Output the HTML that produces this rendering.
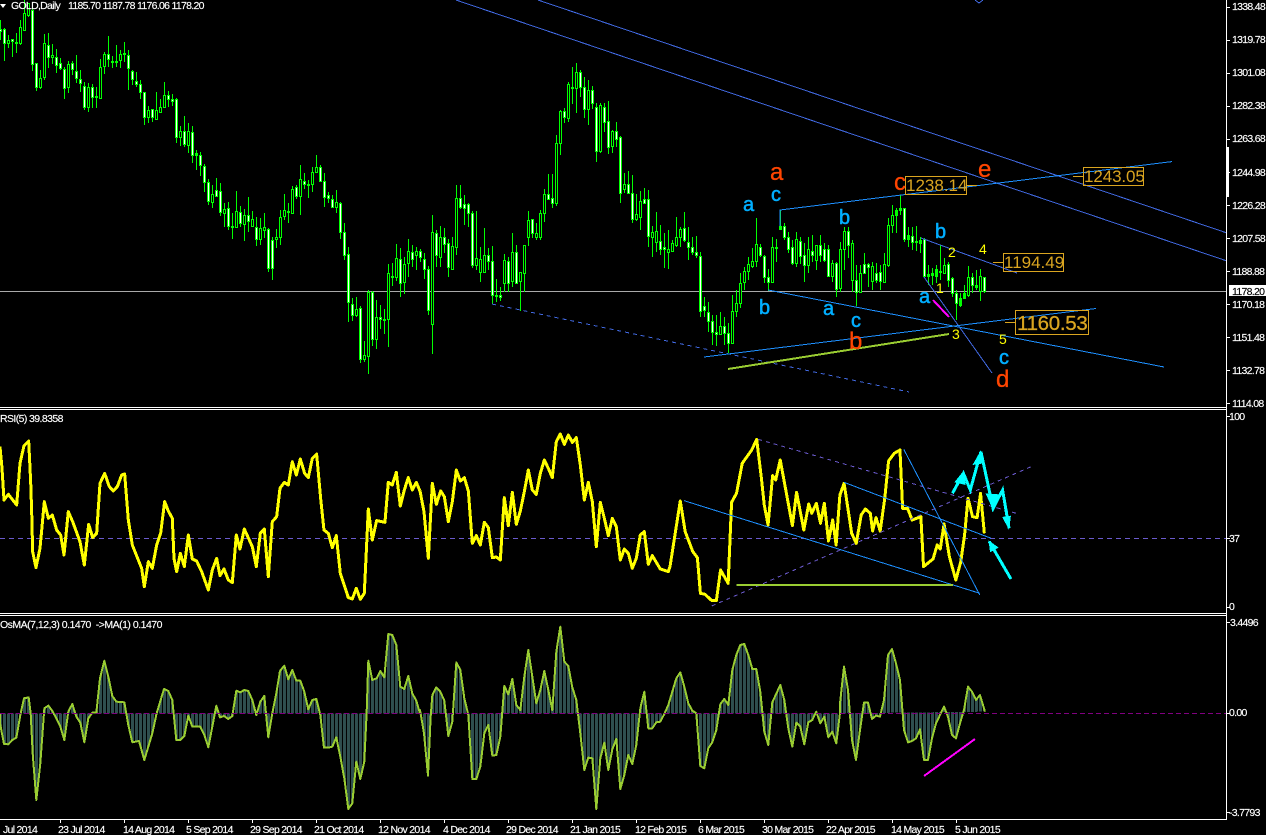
<!DOCTYPE html>
<html><head><meta charset="utf-8"><title>GOLD,Daily</title>
<style>
html,body{margin:0;padding:0;background:#000;width:1266px;height:835px;overflow:hidden}
svg{display:block}
text{font-family:"Liberation Sans",sans-serif}
.t{font-size:10.5px;letter-spacing:-.7px;fill:#fff;stroke:#fff;stroke-width:.15px}
.ln{fill:none;vector-effect:non-scaling-stroke}
.bl{font-size:20px;fill:#00aeff;stroke:#00aeff;stroke-width:.5px}
.or{font-size:24px;fill:#ff4500;stroke:#ff4500;stroke-width:.3px}
.ye{font-size:14px;fill:#ffff00}
.go{fill:#daa520;font-size:17px}
</style></head><body>
<svg width="1266" height="835" viewBox="0 0 1266 835" xmlns="http://www.w3.org/2000/svg">
<defs>
<pattern id="hb" patternUnits="userSpaceOnUse" width="12" height="12"><rect x="0" y="0" width="6" height="12" fill="#2f4f4f"/><rect x="9" y="0" width="3" height="12" fill="#2f4f4f"/></pattern>
</defs>
<rect width="1266" height="835" fill="#000"/>

<!-- price line -->
<path d="M0 291.5H1227" stroke="#a9a9a9" stroke-width="1" shape-rendering="crispEdges"/>

<!-- candles -->
<g transform="translate(.5 0)" fill="none" shape-rendering="crispEdges">
<path stroke="#00ff00" stroke-width="1" d="M0 20V40M4 28V61M8 35V48M12 39V57M16 33V53M20 20V45M24 0V30M28 3V17M32 8V71M36 63V91M40 70V89M44 34V80M48 33V68M52 44V64M56 49V73M60 58V70M64 67V99M68 61V93M72 61V75M76 55V83M80 70V92M84 82V110M88 83V112M92 84V108M96 87V108M100 59V99M104 52V74M108 36V67M112 56V68M116 45V67M120 50V68M124 42V62M128 50V90M132 70V85M136 72V87M140 80V99M144 92V125M148 106V123M152 109V122M156 92V119M160 99V112M164 82V108M168 91V107M172 94V106M176 98V143M180 126V146M184 116V147M188 123V153M192 126V163M196 150V170M200 152V176M204 164V192M208 179V205M212 185V208M216 178V197M220 183V216M224 203V227M228 202V230M232 213V239M236 191V227M240 206V227M244 209V241M248 197V232M252 211V227M256 217V246M260 218V245M264 213V238M268 228V272M272 237V280M276 229V248M280 210V245M284 194V220M288 203V223M292 186V214M296 185V199M300 165V215M304 173V189M308 180V198M312 167V192M316 155V173M320 165V182M324 173V207M328 192V203M332 195V208M336 190V213M340 202V239M344 223V260M348 247V322M352 298V321M356 297V317M360 306V363M364 341V362M368 290V374M372 291V346M376 300V349M380 305V329M384 309V334M388 264V347M392 263V286M396 244V281M400 248V297M404 257V294M408 239V277M412 245V267M416 247V270M420 249V262M424 253V279M428 266V315M432 215V354M436 230V267M440 226V267M444 228V253M448 239V277M452 237V270M456 185V255M460 185V209M464 195V225M468 203V227M472 211V268M476 211V270M480 247V282M484 228V272M488 248V270M492 246V304M496 279V302M500 287V301M504 254V292M508 257V292M512 233V287M516 245V284M520 272V311M524 245V292M528 211V246M532 219V238M536 223V240M540 210V240M544 189V222M548 174V200M552 174V208M556 135V206M560 110V155M564 108V123M568 82V122M572 67V104M576 63V113M580 70V97M584 77V118M588 80V125M592 86V109M596 103V162M600 103V153M604 103V132M608 101V154M612 130V153M616 122V147M620 136V203M624 173V193M628 171V193M632 175V223M636 194V221M640 191V230M644 188V203M648 190V247M652 226V257M656 212V252M660 225V255M664 233V268M668 230V269M672 240V251M676 217V247M680 227V247M684 212V242M688 227V260M692 237V255M696 236V258M700 252V317M704 297V317M708 302V332M712 315V345M716 315V346M720 312V335M724 317V345M728 323V353M732 295V343M736 290V317M740 273V308M744 267V290M748 257V280M752 248V268M756 218V267M760 244V257M764 255V283M768 269V291M772 237V282M776 239V262M780 210V229M784 223V240M788 232V253M792 240V265M796 232V267M800 237V264M804 243V282M808 237V273M812 235V262M816 245V270M820 235V262M824 243V262M828 245V277M832 260V282M836 262V297M840 242V292M844 227V270M848 227V258M852 240V292M856 265V306M860 265V292M864 253V273M868 263V287M872 262V290M876 263V283M880 265V290M884 253V283M888 218V267M892 205V233M896 208V233M900 195V215M904 208V242M908 227V247M912 227V250M916 226V251M920 237V253M924 238V278M928 265V285M932 268V285M936 265V283M940 245V280M944 258V273M948 262V287M952 277V297M956 290V320M960 293V307M964 285V297M968 266V297M972 273V293M976 270V290M980 269V301M984 277V293"/>
<path stroke="#00ff00" stroke-width="3" d="M0 29V32M4 29V44M8 40V44M12 39V42M16 42V44M20 27V44M24 13V31M28 3V16M32 10V65M36 63V88M40 78V88M44 43V78M48 45V58M52 55V58M56 57V66M60 63V69M64 69V89M68 64V88M72 63V70M76 71V79M80 79V84M84 86V108M88 87V108M92 87V98M96 96V98M100 67V99M104 54V67M108 54V60M112 61V63M116 61V63M120 54V61M124 53V55M128 55V69M132 71V80M136 81V85M140 84V93M144 92V118M148 110V118M152 109V118M156 110V120M160 107V113M164 95V108M168 95V100M172 99V102M176 99V138M180 131V138M184 131V145M188 131V146M192 132V156M196 153V156M200 155V166M204 166V183M208 182V202M212 194V203M216 190V197M220 191V213M224 209V214M228 208V227M232 226V228M236 211V228M240 212V224M244 215V225M248 215V222M252 219V227M256 227V240M260 228V240M264 227V231M268 229V269M272 240V269M276 237V240M280 217V238M284 210V217M288 211V213M292 189V214M296 187V197M300 179V197M304 181V185M308 184V186M312 172V185M316 167V173M320 167V182M324 181V198M328 195V199M332 199V208M336 202V208M340 203V233M344 232V256M348 254V303M352 304V316M356 309V316M360 308V360M364 355V360M368 292V357M372 292V340M376 317V340M380 317V320M384 319V321M388 273V320M392 276V278M396 258V278M400 259V284M404 264V283M408 251V264M412 252V260M416 251V256M420 251V258M424 259V270M428 269V311M432 232V325M436 233V256M440 237V258M444 237V245M448 243V268M452 246V270M456 198V248M460 198V208M464 204V209M468 204V214M472 213V266M476 258V266M480 259V273M484 255V273M488 255V262M492 261V296M496 295V297M500 295V298M504 260V284M508 261V284M512 252V282M516 252V284M520 272V282M524 245V274M528 220V238M532 219V234M536 233V238M540 213V238M544 194V214M548 194V200M552 198V204M556 143V204M560 111V144M564 111V118M568 84V119M572 87V89M576 72V89M580 72V88M584 87V110M588 90V110M592 90V104M596 107V152M600 105V152M604 107V123M608 121V148M612 131V147M616 131V140M620 137V194M624 184V190M628 184V194M632 193V220M636 214V220M640 201V218M644 199V204M648 199V237M652 232V238M656 231V243M660 241V250M664 247V250M668 249V253M672 243V252M676 237V246M680 229V238M684 228V241M688 242V248M692 247V253M696 252V256M700 256V312M704 306V311M708 312V322M712 321V333M716 332V335M720 326V335M724 326V334M728 333V344M732 311V344M736 303V312M740 283V304M744 271V283M748 264V272M752 261V267M756 244V262M760 247V256M764 256V278M768 277V283M772 247V283M776 247V249M780 226V230M784 226V238M788 237V250M792 247V264M796 239V264M800 241V257M804 255V266M808 249V266M812 251V256M816 245V261M820 245V256M824 249V261M828 249V277M832 263V277M836 263V290M840 249V289M844 231V250M848 231V246M852 243V281M856 280V293M860 273V293M864 264V274M868 264V268M872 266V282M876 273V281M880 272V282M884 264V283M888 225V266M892 215V226M896 210V216M900 208V211M904 208V240M908 235V240M912 236V243M916 241V243M920 240V244M924 239V277M928 274V277M932 273V276M936 269V277M940 271V273M944 265V274M948 264V281M952 278V294M956 293V304M960 298V306M964 293V299M968 277V296M972 277V286M976 285V288M980 276V292M984 277V292"/>
<path stroke="#fff" stroke-width="1" d="M0 30V31M4 30V43M12 40V41M32 11V64M36 64V87M48 46V57M56 58V65M60 64V68M64 70V88M72 64V69M76 72V78M80 80V83M84 87V107M92 88V97M108 55V59M128 56V68M132 72V79M136 82V84M140 85V92M144 93V117M152 110V117M168 96V99M172 100V101M176 100V137M184 132V144M192 133V155M200 156V165M204 167V182M208 183V201M216 191V196M220 192V212M228 209V226M240 213V223M248 216V221M256 228V239M268 230V268M272 241V268M296 188V196M304 182V184M320 168V181M324 182V197M328 196V198M332 200V207M340 204V232M344 233V255M348 255V302M352 305V315M360 309V359M372 293V339M380 318V319M400 260V283M412 253V259M420 252V257M424 260V269M428 270V310M436 234V255M444 238V244M448 244V267M460 199V207M464 205V208M468 205V213M472 214V265M488 256V261M492 262V295M500 296V297M508 262V283M516 253V283M532 220V233M548 195V199M552 199V203M564 112V117M580 73V87M584 88V109M592 91V103M596 108V151M604 108V122M608 122V147M616 132V139M620 138V193M628 185V193M632 194V219M644 200V203M648 200V236M660 242V249M664 248V249M684 229V240M688 243V247M692 248V252M696 253V255M700 257V311M704 307V310M708 313V321M712 322V332M716 333V334M724 327V333M728 334V343M760 248V255M764 257V277M768 278V282M784 227V237M788 238V249M792 248V263M800 242V256M804 256V265M812 252V255M820 246V255M824 250V260M828 250V276M836 264V289M848 232V245M856 281V292M864 265V273M868 265V267M876 274V280M880 273V281M904 209V239M912 237V242M924 240V276M948 265V280M952 279V293M956 294V303M972 278V285M984 278V291"/>
<path stroke="#000" stroke-width="1" d="M8 41V43M20 28V43M24 14V30M28 4V15M40 79V87M44 44V77M52 56V57M68 65V87M88 88V107M100 68V98M104 55V66M116 62V62M120 55V60M148 111V117M156 111V119M160 108V112M164 96V107M180 132V137M188 132V145M212 195V202M224 210V213M236 212V227M244 216V224M252 220V226M260 229V239M264 228V230M276 238V239M280 218V237M284 211V216M292 190V213M300 180V196M312 173V184M316 168V172M336 203V207M356 310V315M364 356V359M368 293V356M376 318V339M388 274V319M396 259V277M404 265V282M408 252V263M416 252V255M432 233V324M440 238V257M452 247V269M456 199V247M476 259V265M480 260V272M484 256V272M504 261V283M512 253V281M520 273V281M524 246V273M528 221V237M536 234V237M540 214V237M544 195V213M556 144V203M560 112V143M568 85V118M576 73V88M588 91V109M600 106V151M612 132V146M624 185V189M636 215V219M640 202V217M652 233V237M656 232V242M668 250V252M672 244V251M676 238V245M680 230V237M720 327V334M732 312V343M736 304V311M740 284V303M744 272V282M748 265V271M752 262V266M756 245V261M772 248V282M796 240V263M808 250V265M816 246V260M832 264V276M840 250V288M844 232V249M852 244V280M860 274V292M872 267V281M884 265V282M888 226V265M892 216V225M944 266V273M968 278V295M980 277V291"/>
</g>

<!-- main chart lines -->
<g fill="none" stroke-width="1" shape-rendering="crispEdges">
<path stroke="#4169e1" d="M456 0L1227 261M538 0L1227 233M921 238L1017 273M924 277L992 373M975 0L979 3L983 0"/>
<path stroke="#4169e1" stroke-dasharray="4 4" d="M492 304L909 392"/>
<path stroke="#1e90ff" d="M780 226V210L1172 161.6M768 290L1164 367M704 357L1096 308.5"/>
<path stroke="#9acd32" stroke-width="2" d="M728 369L949 334"/>
<path stroke="#ff00ff" stroke-width="2" d="M933 300L949 317"/>
</g>

<!-- labelled boxes -->
<g fill="none" stroke="#daa520" stroke-width="1" shape-rendering="crispEdges">
<rect x="905.5" y="176.5" width="61" height="18"/><path d="M967 185.5H977"/>
<rect x="1083.5" y="167.5" width="60" height="18"/><path d="M1073 176.5H1083"/>
<rect x="1003.5" y="253.5" width="60" height="18"/><path d="M993 262.5H1003"/>
<rect x="1015.5" y="310.5" width="73" height="24"/><path d="M1005 322.5H1015"/>
</g>
<text class="go" x="906" y="191" style="letter-spacing:0">1238.14</text>
<text class="go" x="1084" y="182" style="letter-spacing:-.1px">1243.05</text>
<text class="go" x="1004" y="268">1194.49</text>
<text class="go" x="1017" y="330" style="font-size:20.5px;letter-spacing:-.3px;stroke:#daa520;stroke-width:.3px">1160.53</text>

<!-- wave labels -->
<text class="or" x="770" y="180">a</text>
<text class="or" x="894" y="190">c</text>
<text class="or" x="978" y="177">e</text>
<text class="or" x="849" y="349">b</text>
<text class="or" x="996" y="387">d</text>
<text class="bl" x="771" y="201">c</text>
<text class="bl" x="743" y="211">a</text>
<text class="bl" x="759" y="314">b</text>
<text class="bl" x="823" y="315">a</text>
<text class="bl" x="851" y="327">c</text>
<text class="bl" x="839" y="224">b</text>
<text class="bl" x="935" y="238">b</text>
<text class="bl" x="919" y="303">a</text>
<text class="bl" x="999" y="364">c</text>
<text class="ye" x="936" y="293">1</text>
<text class="ye" x="948" y="257">2</text>
<text class="ye" x="979" y="254">4</text>
<text class="ye" x="952" y="339">3</text>
<text class="ye" x="999" y="344">5</text>

<!-- RSI -->
<path d="M0 538.5H1226" stroke="#6a5acd" stroke-dasharray="5 4" fill="none" shape-rendering="crispEdges"/>
<g fill="none" stroke="#ffff00" stroke-width="3" stroke-linejoin="round" shape-rendering="crispEdges">
<polyline class="ln" transform="translate(0 405) scale(.3333)" points="0,125 6,190 12,285 25,268 50,300 60,175 72,122 86,108 92,230 95,320 98,440 108,488 120,430 133,290 145,340 157,330 170,375 182,390 192,450 205,320 218,350 240,410 253,480 266,358 278,398 290,385 300,235 314,205 328,245 340,258 352,245 365,210 374,207 385,345 397,420 415,465 425,490 433,545 445,470 457,490 470,420 482,385 494,290 505,318 517,340 522,460 530,500 541,445 553,485 565,390 577,462 590,468 605,500 625,555 637,495 650,460 660,512 672,492 685,525 697,533 709,390 720,432 733,372 757,425 769,485 781,385 793,372 805,515 817,350 830,335 840,250 853,232 865,240 877,170 889,210 901,162 914,205 925,218 937,160 950,147 962,280 972,375 985,385 997,428 1009,392 1021,505 1045,578 1057,582 1069,550 1081,583 1093,565 1100,420 1105,312 1117,405 1130,347 1155,352 1165,232 1177,240 1189,202 1201,303 1213,255 1225,218 1237,255 1249,232 1260,258"/>
<polyline class="ln" transform="translate(420 405) scale(.3333)" points="0,258 12,320 25,460 37,235 49,298 62,258 73,275 85,350 97,290 109,195 121,228 133,218 145,258 157,415 169,392 181,420 193,352 205,368 217,458 229,456 241,465 253,278 265,362 277,262 289,358 301,318 313,260 325,195 337,255 349,268 361,205 373,165 385,190 397,218 409,110 421,87 433,118 445,90 457,112 469,98 481,180 493,285 505,232 517,290 529,425 541,292 553,340 565,392 577,340 589,365 601,465 613,432 625,445 637,490 649,460 661,390 673,380 685,478 697,452 721,492 745,500 750,485"/>
<polyline class="ln" transform="translate(670 405) scale(.3801 .3333)" points="0,485 27,288 40,380 60,440 72,458 80,565 92,568 110,587 122,587 133,495 153,535 162,292 175,265 190,175 215,135 228,103 240,215 248,300 258,360 270,212 278,225 290,165 322,362 333,262 352,375 365,297 373,325 385,295 396,355 406,295 417,408 428,345 437,420 447,270 458,235 478,385 490,415 503,330 514,312 527,325 533,378 542,338 553,378 565,280 575,168 590,145 605,135 612,310 625,310 637,345 660,335 667,485 692,462 703,420 711,432 721,357 735,455 752,525 765,470 775,390 784,280 796,335 808,338 817,265 827,385"/>
</g>
<g transform="translate(670 405) scale(.3801 .3333)" fill="none" shape-rendering="crispEdges">
<path class="ln" stroke="#1e90ff" stroke-width="1" d="M37 287L815 565M458 232L845 400"/>
<path class="ln" stroke="#1e90ff" stroke-width="1" d="M615 133L815 570"/>
<path class="ln" stroke="#6a5acd" stroke-width="1" stroke-dasharray="4 4" d="M110 603L950 185M232 103L920 328"/>
<path class="ln" stroke="#9acd32" stroke-width="2" d="M175 540H745"/>
<path class="ln" stroke="#00ffff" stroke-width="3" d="M743 265L772 205L790 255L818 140L850 310L875 255L892 370M897 522L840 410"/>
<g fill="#00ffff">
<polygon points="772,198 778,240 748,232"/>
<polygon points="818,135 826,175 796,180"/>
<polygon points="850,315 864,268 830,265"/>
<polygon points="892,375 897,332 874,336"/>
<polygon points="838,406 865,428 842,442"/>
</g>
</g>

<!-- OsMA -->
<g fill="url(#hb)" stroke="#9acd32" stroke-width="2" stroke-linejoin="round" shape-rendering="crispEdges">
<polyline class="ln" style="fill:url(#hb)" transform="translate(0 610) scale(.3333)" points="0,310 0,340 12,402 25,403 37,390 49,383 62,310 72,265 86,262 92,310 98,430 109,570 121,460 133,295 145,287 157,303 169,325 181,350 193,390 205,305 217,282 229,320 241,338 253,397 265,325 277,308 289,308 300,205 313,152 325,200 337,258 349,275 373,277 385,345 397,397 417,393 433,450 457,370 470,310 492,237 505,243 517,270 529,390 541,390 553,378 565,317 577,350 601,350 613,375 625,412 637,350 649,287 660,322 672,318 685,327 697,318 709,242 721,247 733,240 745,243 757,270 769,315 781,275 793,258 805,382 817,310 829,250 840,183 853,167 865,208 877,180 889,212 901,212 913,245 925,298 937,270 949,267 961,315 972,413 985,413 997,410 1009,382 1021,440 1033,505 1045,597 1057,580 1069,455 1081,507 1093,455 1100,310 1105,152 1117,210 1130,205 1141,183 1153,202 1165,72 1177,75 1189,105 1201,230 1213,237 1225,198 1237,250 1249,272 1260,310"/>
<polyline class="ln" style="fill:url(#hb)" transform="translate(420 610) scale(.3333)" points="0,310 0,300 12,370 24,497 32,320 37,255 49,232 61,245 73,272 85,378 97,335 109,157 121,180 133,265 145,315 157,507 169,507 181,470 193,370 205,345 217,437 229,435 241,380 253,228 265,253 277,207 289,285 301,300 313,200 325,120 337,200 349,280 361,240 373,183 385,240 397,300 409,125 421,50 433,155 445,168 457,232 469,270 481,370 493,480 505,443 517,445 523,520 529,597 535,520 541,445 553,398 565,480 577,418 589,387 601,537 613,495 625,435 637,462 649,405 661,295 673,245 685,355 697,355 709,337 721,335 733,312 745,285 757,245 769,205 781,187 793,230 805,280 817,302 829,310 841,468 853,475 865,415 877,397 889,360 901,283 913,267 925,285 937,180 949,135 961,105 973,102 985,135 997,177 1009,177 1021,245 1033,365 1045,405 1057,277 1081,225 1093,270 1105,355 1117,410 1129,338 1141,350 1153,403 1165,337 1177,330 1189,305 1201,340 1213,320 1225,382 1237,365 1249,400 1260,310"/>
<polyline class="ln" style="fill:url(#hb)" transform="translate(840 610) scale(.3333)" points="0,310 0,280 12,170 24,240 36,390 48,450 60,360 72,278 84,278 96,327 108,317 120,320 132,270 144,135 156,117 168,160 180,210 192,360 204,397 216,393 228,385 240,358 252,450 264,450 276,385 288,340 312,290 324,320 336,375 348,385 360,340 372,300 384,230 396,245 408,270 420,255 435,305"/>
</g>
<path d="M0 713.5H1226" stroke="#800080" stroke-dasharray="5 3" fill="none" shape-rendering="crispEdges"/>
<path d="M924 776L975 739" stroke="#ff00ff" stroke-width="2" fill="none" shape-rendering="crispEdges"/>

<!-- frame -->
<g fill="#fff" shape-rendering="crispEdges">
<rect x="0" y="407" width="1227" height="1"/><rect x="0" y="409" width="1227" height="1"/>
<rect x="0" y="613" width="1227" height="1"/><rect x="0" y="615" width="1227" height="1"/>
<rect x="0" y="819" width="1227" height="1"/>
<rect x="1226" y="0" width="1" height="820"/>
<rect x="1226" y="147" width="3" height="50"/>
</g>
<path stroke="#fff" fill="none" shape-rendering="crispEdges" d="M1227 7.5h3M1227 40.5h3M1227 73.5h3M1227 106.5h3M1227 139.5h3M1227 172.5h3M1227 205.5h3M1227 238.5h3M1227 271.5h3M1227 304.5h3M1227 337.5h3M1227 370.5h3M1227 403.5h3M1227 416.5h3M1227 538.5h3M1227 607.5h3M1227 622.5h3M1227 713.5h3M1227 812.5h3M60.5 820v3M124.5 820v3M188.5 820v3M252.5 820v3M316.5 820v3M380.5 820v3M444.5 820v3M508.5 820v3M572.5 820v3M636.5 820v3M700.5 820v3M764.5 820v3M828.5 820v3M892.5 820v3M956.5 820v3"/>

<!-- header text -->
<polygon points="0,4 6,4 3,8" fill="#fff"/>
<text class="t" x="11" y="9">GOLD,Daily</text>
<text class="t" x="68" y="9">1185.70 1187.78 1176.06 1178.20</text>
<text class="t" x="0" y="422" style="letter-spacing:-.6px">RSI(5) 39.8358</text>
<text class="t" x="0" y="628" xml:space="preserve" style="letter-spacing:-.5px">OsMA(7,12,3) 0.1470  -&gt;MA(1) 0.1470</text>

<!-- price axis -->
<text class="t" x="1232" y="10">1338.48</text>
<text class="t" x="1232" y="43">1319.78</text>
<text class="t" x="1232" y="76">1301.08</text>
<text class="t" x="1232" y="109">1282.38</text>
<text class="t" x="1232" y="142">1263.68</text>
<text class="t" x="1232" y="176">1244.98</text>
<text class="t" x="1232" y="209">1226.28</text>
<text class="t" x="1232" y="242">1207.58</text>
<text class="t" x="1232" y="275">1188.88</text>
<text class="t" x="1232" y="308">1170.18</text>
<text class="t" x="1232" y="341">1151.48</text>
<text class="t" x="1232" y="374">1132.78</text>
<text class="t" x="1232" y="407">1114.08</text>
<rect x="1229" y="285" width="37" height="11" fill="#fff"/>
<text class="t" x="1232" y="295" style="fill:#000;stroke:#000">1178.20</text>

<text class="t" x="1229" y="420">100</text>
<text class="t" x="1229" y="542">37</text>
<text class="t" x="1229" y="610">0</text>
<text class="t" x="1230" y="626">3.4496</text>
<text class="t" x="1229" y="716">0.00</text>
<text class="t" x="1229" y="816">-3.7793</text>

<!-- time axis -->
<text class="t" x="3" y="833">Jul 2014</text>
<text class="t" x="58" y="833">23 Jul 2014</text>
<text class="t" x="123" y="833">14 Aug 2014</text>
<text class="t" x="186" y="833">5 Sep 2014</text>
<text class="t" x="250" y="833">29 Sep 2014</text>
<text class="t" x="314" y="833">21 Oct 2014</text>
<text class="t" x="378" y="833">12 Nov 2014</text>
<text class="t" x="443" y="833">4 Dec 2014</text>
<text class="t" x="506" y="833">29 Dec 2014</text>
<text class="t" x="570" y="833">21 Jan 2015</text>
<text class="t" x="635" y="833">12 Feb 2015</text>
<text class="t" x="698" y="833">6 Mar 2015</text>
<text class="t" x="762" y="833">30 Mar 2015</text>
<text class="t" x="826" y="833">22 Apr 2015</text>
<text class="t" x="891" y="833">14 May 2015</text>
<text class="t" x="955" y="833">5 Jun 2015</text>
</svg>
</body></html>
